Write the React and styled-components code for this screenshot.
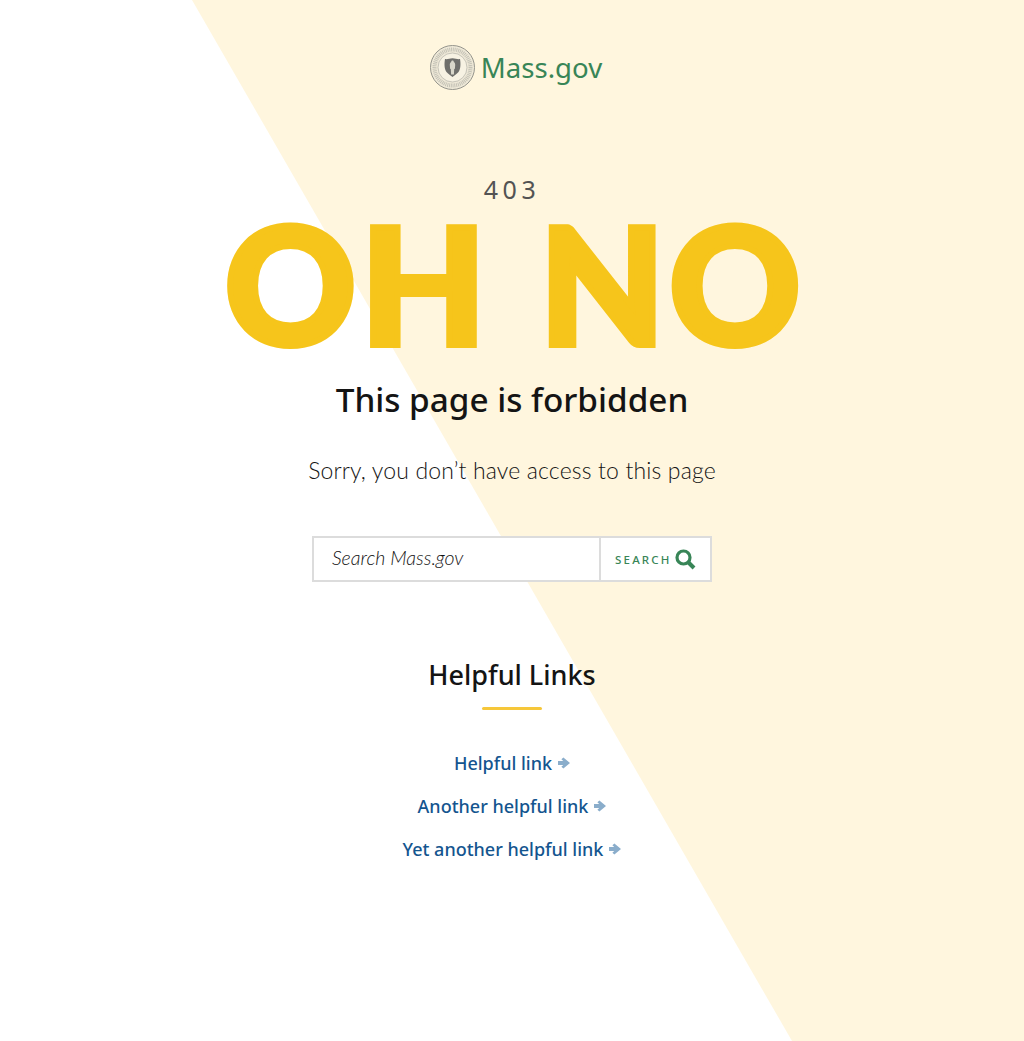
import React from 'react'
import styled, { createGlobalStyle } from 'styled-components'

const GlobalStyle = createGlobalStyle`
  html, body {
    margin: 0;
    padding: 0;
    background: #fff;
    font-family: "Lato", "Noto Sans", sans-serif;
  }
`

const Page = styled.main`
  position: relative;
  height: 1041px;
  overflow: hidden;
  display: flex;
  flex-direction: column;
  align-items: center;

  &::before {
    content: "";
    position: absolute;
    inset: 0;
    background: #fff6de;
    clip-path: polygon(192px 0, 100% 0, 100% 100%, 792px 100%);
  }

  & > * {
    position: relative;
  }
`

const Logo = styled.a`
  display: flex;
  align-items: center;
  gap: 6px;
  margin-top: 45px;
  margin-left: 8px;
  color: #388557;
  font-family: "Noto Sans", sans-serif;
  font-size: 27.600px;
  line-height: 45px;
  text-decoration: none;
`

const Code = styled.div`
  margin-top: 83px;
  font-family: "Noto Sans", sans-serif;
  font-size: 25px;
  line-height: 32px;
  letter-spacing: 4.500px;
  color: #535353;
`

const Shout = styled.h1`
  margin: -11px 0 5px 6px;
  font-family: "Lato", sans-serif;
  font-weight: 900;
  font-size: 162px;
  line-height: 178px;
  letter-spacing: 4.500px;
  word-spacing: 6px;
  -webkit-text-stroke: 6px #f6c51b;
  color: #f6c51b;
  white-space: nowrap;
`

const Title = styled.h2`
  margin: 0;
  font-family: "Noto Sans", sans-serif;
  font-size: 33.300px;
  line-height: 44px;
  font-weight: 500;
  color: #141414;
`

const Message = styled.p`
  margin: 33px 0 0;
  font-family: "Lato", sans-serif;
  font-weight: 300;
  font-size: 23px;
  line-height: 32px;
  letter-spacing: 0.15px;
  color: #141414;
`

const SearchForm = styled.form`
  display: flex;
  width: 400px;
  height: 46px;
  box-sizing: border-box;
  margin-top: 50px;
  border: 2px solid #dcdcdc;
  background: #fff;
`

const SearchInput = styled.input`
  flex: 1;
  min-width: 0;
  border: none;
  outline: none;
  padding: 0 18px 3px;
  background: transparent;
  font-family: "Lato", sans-serif;
  font-weight: 300;
  font-style: italic;
  font-size: 19.500px;
  color: #141414;

  &::placeholder {
    color: #141414;
    opacity: 1;
  }
`

const SearchButton = styled.button`
  display: flex;
  align-items: center;
  gap: 3px;
  width: 111px;
  box-sizing: border-box;
  padding: 0 0 0 14px;
  border: none;
  border-left: 2px solid #dcdcdc;
  background: transparent;
  color: #388557;
  font-family: "Noto Sans", sans-serif;
  font-weight: 500;
  font-size: 11.500px;
  letter-spacing: 2.200px;
`

const LinksHeading = styled.h2`
  margin: 75px 0 0;
  font-family: "Noto Sans", sans-serif;
  font-size: 27px;
  line-height: 36px;
  font-weight: 500;
  color: #141414;
`

const Rule = styled.div`
  width: 60px;
  height: 3px;
  margin-top: 14px;
  border-radius: 2px;
  background: #f6c73a;
`

const LinkList = styled.ul`
  list-style: none;
  margin: 39px 0 0;
  padding: 0;
  display: flex;
  flex-direction: column;
  align-items: center;
  gap: 15px;
`

const HelpfulLink = styled.a`
  display: flex;
  align-items: center;
  gap: 6px;
  height: 28px;
  color: #14558f;
  font-family: "Noto Sans", sans-serif;
  font-size: 18px;
  font-weight: 500;
  text-decoration: none;
`

const Seal = () => (
  <svg width="45" height="45" viewBox="0 0 45 45">
    <circle cx="22.5" cy="22.5" r="22" fill="#efe9d8" stroke="#94948c" />
    <circle cx="22.5" cy="22.5" r="18" fill="none" stroke="#c4c2b6" strokeWidth="4" strokeDasharray="1 .8" />
    <circle cx="22.5" cy="22.5" r="14.500" fill="#f7f2e3" stroke="#a6a69e" strokeWidth=".6" />
    <path d="M15 14c2.500.6 4.500-.8 7.500-.8s5 1.400 7.500.8c.8 4.500.8 10-1.500 13-1.500 2-3.800 3-6 5-2.200-2-4.500-3-6-5-2.300-3-2.300-8.500-1.500-13z" fill="#6f6f6c" />
    <path d="M22.500 15.500c.9 0 1.400.7 1.300 1.600 1.100.5 1.400 1.500 1.400 3l-.3 3.700-.7.200-.3 5.500h-2.800l-.3-5.500-.7-.2-.3-3.700c0-1.500.3-2.500 1.400-3-.1-.9.400-1.600 1.300-1.600z" fill="#d9d7cb" />
  </svg>
)

const SearchIcon = () => (
  <svg width="21" height="21" viewBox="0 0 21 21" fill="none" stroke="#388557">
    <circle cx="8.500" cy="8.500" r="6.500" strokeWidth="3.200" />
    <path d="M13.500 13.500L19 19" strokeWidth="4" />
  </svg>
)

const Arrow = () => (
  <svg width="12" height="12" viewBox="0 0 12 12" fill="#8aadcb">
    <path d="M0 4h5.200L3.400 2.200 5.400.4 12 6l-6.600 5.600-2-1.800L5.200 8H0z" />
  </svg>
)

const links = ['Helpful link', 'Another helpful link', 'Yet another helpful link']

export default function App() {
  return (
    <Page>
      <GlobalStyle />
      <Logo href="#">
        <Seal />
        Mass.gov
      </Logo>
      <Code>403</Code>
      <Shout>OH NO</Shout>
      <Title>This page is forbidden</Title>
      <Message>Sorry, you don’t have access to this page</Message>
      <SearchForm onSubmit={(e) => e.preventDefault()}>
        <SearchInput placeholder="Search Mass.gov" />
        <SearchButton type="submit">
          SEARCH
          <SearchIcon />
        </SearchButton>
      </SearchForm>
      <LinksHeading>Helpful Links</LinksHeading>
      <Rule />
      <LinkList>
        {links.map((text) => (
          <li key={text}>
            <HelpfulLink href="#">
              {text}
              <Arrow />
            </HelpfulLink>
          </li>
        ))}
      </LinkList>
    </Page>
  )
}
